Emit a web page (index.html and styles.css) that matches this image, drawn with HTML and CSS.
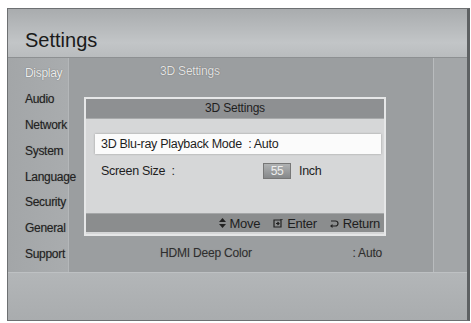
FILE: index.html
```html
<html><head>
<title>Settings</title>
<link rel="stylesheet" href="styles.css">
</head><body>

<div class="screen">
<div class="head">Settings</div>
<div class="main">
<div class="menu">
<div class="item sel">Display</div>
<div class="item">Audio</div>
<div class="item">Network</div>
<div class="item">System</div>
<div class="item">Language</div>
<div class="item">Security</div>
<div class="item">General</div>
<div class="item">Support</div>
</div>
<div class="pane">
<div class="row top"><span>3D Settings</span></div>
<div class="rows-gap"></div>
<div class="row bottom"><span>HDMI Deep Color</span><span class="val">: Auto</span></div>
</div>
<div class="side"></div>
</div>
<div class="foot"></div>

<div class="dialog">
<div class="dtitle">3D Settings</div>
<div class="dbody">
<div class="opt on">3D Blu-ray Playback Mode&nbsp; : Auto</div>
<div class="opt"><span class="lbl">Screen Size&nbsp; :</span><span class="num">55</span><span>Inch</span></div>
</div>
<div class="dfoot">
<span class="key"><svg width="7" height="10" viewBox="0 0 7 10"><path d="M3.5 0L7 4H0z M3.5 10L7 6H0z" fill="#222"/></svg>Move</span>
<span class="key"><svg width="10" height="9" viewBox="0 0 10 9"><path d="M1 1H8V8H1z M3 4.5H6 M4.5 3L6 4.5 4.5 6 M8 1V0H10" fill="none" stroke="#222" stroke-width="1.2"/></svg>Enter</span>
<span class="key"><svg width="9" height="9" viewBox="0 0 9 9"><path d="M1 2H5.5A2.5 2.5 0 0 1 5.5 7H1" fill="none" stroke="#222" stroke-width="1.2"/><path d="M0 7L2.5 5V9z" fill="#222"/></svg>Return</span>
</div>
</div>
</div>

</body></html>
```

FILE: styles.css
```css
body{margin:0;background:#fff;font-family:"Liberation Sans",sans-serif;}

.screen{position:relative;box-sizing:border-box;width:463px;height:313px;margin:8px 0px 0px 7px;border:1px solid #6d7072;border-right:3px solid #5e6163;display:flex;flex-direction:column;background:#a4a7a9;}

.head{height:49px;box-sizing:border-box;padding:20px 0px 0px 17px;font-size:20px;color:#1a1a1a;background:linear-gradient(#a9acae,#c2c5c7 70%,#b9bcbe);border-bottom:1px solid #8d9092;}

.main{display:flex;height:214px;background:#9b9ea0;}
.menu{width:60px;background:linear-gradient(90deg,#a3a6a8,#a9acae);border-right:1px solid #b4b7b9;padding-top:8px;}
.item{height:25.9px;padding-left:17px;font-size:12px;letter-spacing:-0.3px;color:#222;text-shadow:0px 0px 1px #777;}
.item.sel{color:#eeeeee;text-shadow:0px 0px 1px #555;}

.pane{flex:1;display:flex;flex-direction:column;border-right:1px solid #b9bcbe;}
.row{display:flex;height:26px;padding:6px 0px 0px 91px;font-size:12px;letter-spacing:-0.2px;color:#e4e4e4;text-shadow:0px 0px 1px #555;}
.rows-gap{flex:1;}
.row.bottom{color:#2e2e2e;text-shadow:0px 0px 1px #888;height:26px;padding-top:0px;}
.row.bottom .val{margin-left:auto;margin-right:51px;}
.side{width:33px;background:#a3a6a8;}

.foot{flex:1;background:linear-gradient(#b3b6b8,#a9acae);border-top:1px solid #bec1c3;}

.dialog{position:absolute;left:76px;top:88px;width:302px;height:139px;box-sizing:border-box;border:2px solid #e6e7e8;background:#d6d7d8;display:flex;flex-direction:column;}
.dtitle{height:19px;line-height:19px;text-align:center;font-size:12px;letter-spacing:-0.2px;color:#1f1f1f;background:#8e9092;border-bottom:1px solid #a8aaab;}
.dbody{flex:1;padding:15px 3px 0px 9px;}
.opt{display:flex;align-items:center;height:20px;padding-left:6px;font-size:12.5px;letter-spacing:-0.3px;color:#1e1e1e;margin-bottom:1px;}
.opt.on{background:#fbfbfb;box-shadow:0px 0px 2px #999;margin-bottom:7px;}
.lbl{width:162px;}
.num{width:28px;height:16px;margin-right:8px;box-sizing:border-box;border:1px solid #777;background:linear-gradient(#b0b2b3,#86888a);color:#eeeeee;font-size:12px;text-align:center;line-height:14px;}
.dfoot{height:18px;display:flex;justify-content:flex-end;align-items:center;gap:13px;padding-right:4px;background:#8b8d8e;border-top:1px solid #a5a7a8;font-size:13px;letter-spacing:-0.3px;color:#1e1e1e;margin-bottom:2px;}
.key{display:flex;align-items:center;gap:4px;}
```
